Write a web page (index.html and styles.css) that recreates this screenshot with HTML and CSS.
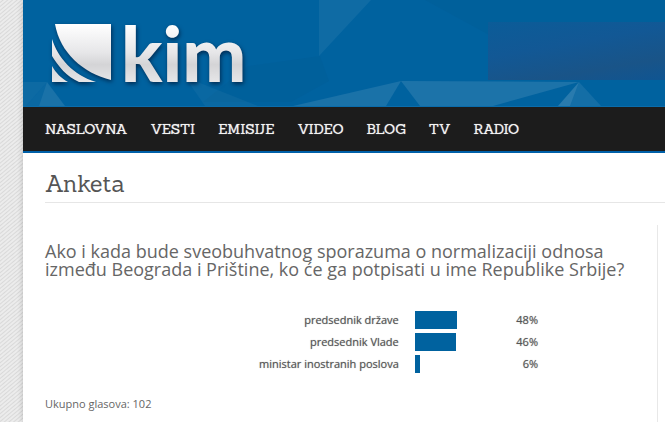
FILE: index.html
```html
<!DOCTYPE html>
<html lang="sr-Latn">
<head>
    <meta charset="UTF-8">
    <meta name="viewport" content="width=device-width, initial-scale=1.0">
    <title>Anketa - kim</title>
    <link rel="stylesheet" href="styles.css">
</head>
<body>
    <div class="page">
        <header class="header">
            <!-- Low poly background -->
            <svg class="header-bg" viewBox="0 0 642 106" preserveAspectRatio="xMinYMin slice" aria-hidden="true">
                <g fill="#004a7c" fill-opacity="0.1">
                    <polygon points="402,0 642,0 642,60 505,56"/>
                    <polygon points="225,66 297,56 306,81 268,102 180,102"/>
                </g>
                <g fill="#fff">
                    <polygon points="296,0 348,0 296,56" fill-opacity="0.06"/>
                    <polygon points="378,81 270,106 363,106" fill-opacity="0.1"/>
                    <polygon points="378,81 556,82 470,106 397,106" fill-opacity="0.11"/>
                    <polygon points="556,82 535,106 547,106" fill-opacity="0.16"/>
                    <polygon points="556,82 547,106 578,106" fill-opacity="0.08"/>
                    <polygon points="0,82 24,82 3,106 0,106" fill-opacity="0.05"/>
                    <polygon points="24,82 42,106 16,106" fill-opacity="0.1"/>
                    <polygon points="24,82 16,106 3,106" fill-opacity="0.04"/>
                    <polygon points="162,77 235,106 182,106" fill-opacity="0.04"/>
                </g>
            </svg>

            <a class="logo" href="#" aria-label="kim">
                <svg width="220" height="106" viewBox="0 -20 220 106">
                    <defs>
                        <linearGradient id="silver" gradientUnits="userSpaceOnUse" x1="0" y1="4" x2="0" y2="62">
                            <stop offset="0" stop-color="#fff"/>
                            <stop offset="0.5" stop-color="#e6e6e8"/>
                            <stop offset="0.7" stop-color="#d4d4d6"/>
                            <stop offset="1" stop-color="#e6e6e8"/>
                        </linearGradient>
                    </defs>
                    <g fill="url(#silver)">
                        <path d="M10 4H66V60C38 53 15 33 10 4Z"/>
                        <path d="M7 19C13 38 28 55 51 62H34C22 57 13 46 7 36Z"/>
                        <path d="M7 46C11 53 16 58 23 62H7Z"/>
                        <text class="logo-text" x="76" y="62">kim</text>
                    </g>
                </svg>
            </a>

            <div class="banner"></div>
        </header>

        <nav class="nav">
            <a href="#">NASLOVNA</a>
            <a href="#">VESTI</a>
            <a href="#">EMISIJE</a>
            <a href="#">VIDEO</a>
            <a href="#">BLOG</a>
            <a href="#">TV</a>
            <a href="#">RADIO</a>
        </nav>

        <h1 class="title">Anketa</h1>

        <div class="columns">
            <main class="poll">
                <h2 class="question">Ako i kada bude sveobuhvatnog sporazuma o normalizaciji odnosa između Beograda i Prištine, ko će ga potpisati u ime Republike Srbije?</h2>

                <table class="results">
                    <tr>
                        <th scope="row">predsednik države</th>
                        <td><div class="bar" style="width: 48%"></div></td>
                        <td class="percent">48%</td>
                    </tr>
                    <tr>
                        <th scope="row">predsednik Vlade</th>
                        <td><div class="bar" style="width: 46%"></div></td>
                        <td class="percent">46%</td>
                    </tr>
                    <tr>
                        <th scope="row">ministar inostranih poslova</th>
                        <td><div class="bar" style="width: 6%"></div></td>
                        <td class="percent">6%</td>
                    </tr>
                </table>

                <p class="total">Ukupno glasova: 102</p>
            </main>
            <aside class="sidebar"></aside>
        </div>
    </div>
</body>
</html>
```
FILE: styles.css
```css
* {
    box-sizing: border-box;
}

body {
    margin: 0;
    font-family: "Open Sans", "Noto Sans", sans-serif;
    font-size: 11px;
    color: #666;
    background: repeating-linear-gradient(140deg, #ececec 0, #ececec 1px, #d9d9d9 2px, #ececec 3px);
}

.page {
    display: flex;
    flex-direction: column;
    min-height: 100vh;
    margin-left: 23px;
    background: #fff;
    box-shadow: 0 0 6px rgba(0, 0, 0, 0.2);
}

/* Header */
.header {
    position: relative;
    display: flex;
    justify-content: space-between;
    align-items: flex-start;
    padding-left: 22px;
    background: #00629f;
    border-bottom: 1px solid #0a6cab;
}

.header-bg {
    position: absolute;
    top: 0;
    left: 0;
    width: 100%;
    height: 100%;
}

.logo {
    position: relative; /* Keep above the background */
}

.logo svg {
    display: block;
    filter: drop-shadow(1px 2px 2px rgba(0, 20, 50, 0.7));
}

.logo-text {
    font-family: Lato, sans-serif;
    font-size: 76px;
    font-weight: 900;
}

.banner {
    position: relative;
    width: 177px;
    height: 58px;
    margin-top: 22px;
    background: linear-gradient(170deg, #0b5c98, #125895 40%, #195488 75%, #0f5592);
}

/* Navigation */
.nav {
    display: flex;
    gap: 23px;
    padding: 0 22px;
    line-height: 44px;
    background: #1c1c1c;
    border-bottom: 2px solid #0060a8;
}

.nav a {
    font-family: Sanchez, "DejaVu Serif", serif;
    font-size: 14px;
    color: #f4f4f4;
    text-decoration: none;
    text-shadow: 0 0 1px #aaa;
}

.title {
    margin: 0 0 22px 22px;
    padding: 14px 0 2px;
    font-family: Sanchez, "DejaVu Serif", serif;
    font-size: 23px;
    font-weight: 400;
    line-height: 33px;
    color: #555;
    border-bottom: 1px solid #e6e6e6;
}

/* Poll */
.columns {
    display: flex;
    flex: 1;
}

.poll {
    flex: 1;
    padding: 17px 18px 8px 22px;
}

.sidebar {
    width: 8px;
    border-left: 1px solid #e8e8e8;
}

.question {
    margin: 0;
    font-size: 18px;
    font-weight: 400;
    line-height: 18px;
}

.results {
    width: 83%;
    margin: 31px 0 20px;
    table-layout: fixed;
    border-collapse: collapse;
    line-height: 18px;
    color: #555;
}

.results th,
.results td {
    padding: 2px 0;
    font-weight: 400;
    text-shadow: 0 0 1px #999;
}

.results th {
    width: 75%;
    padding-right: 16px;
    text-align: right;
}

.results td {
    width: 18%;
}

.results .percent {
    width: 7%;
    text-align: right;
}

.bar {
    height: 18px;
    background: #00629f;
}

.total {
    margin: 0;
    line-height: 18px;
}
```
